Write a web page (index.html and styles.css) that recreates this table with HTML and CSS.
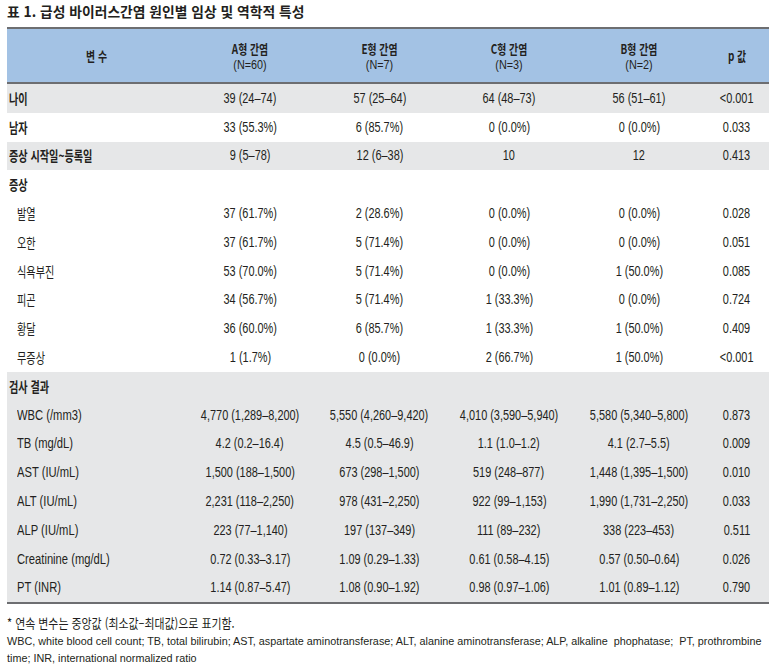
FILE: index.html
```html
<!DOCTYPE html>
<html lang="ko">
<head>
<meta charset="utf-8">
<title>표 1</title>
<link rel="stylesheet" href="styles.css">
</head>
<body>
<h1 class="title">표 1. 급성 바이러스간염 원인별 임상 및 역학적 특성</h1>
<table class="data">
  <colgroup>
    <col class="c-var"><col class="c-a"><col class="c-e"><col class="c-c"><col class="c-b"><col class="c-p">
  </colgroup>
  <thead>
    <tr>
      <th><span class="h1">변 수</span></th>
      <th><span class="h1">A형 간염</span><span class="h2">(N=60)</span></th>
      <th><span class="h1">E형 간염</span><span class="h2">(N=7)</span></th>
      <th><span class="h1">C형 간염</span><span class="h2">(N=3)</span></th>
      <th><span class="h1">B형 간염</span><span class="h2">(N=2)</span></th>
      <th><span class="h1">p 값</span></th>
    </tr>
  </thead>
  <tbody class="shade">
    <tr><td class="label ko bold"><span class="n">나이</span></td><td><span class="n">39 (24–74)</span></td><td><span class="n">57 (25–64)</span></td><td><span class="n">64 (48–73)</span></td><td><span class="n">56 (51–61)</span></td><td><span class="n">&lt;0.001</span></td></tr>
  </tbody>
  <tbody>
    <tr><td class="label ko bold"><span class="n">남자</span></td><td><span class="n">33 (55.3%)</span></td><td><span class="n">6 (85.7%)</span></td><td><span class="n">0 (0.0%)</span></td><td><span class="n">0 (0.0%)</span></td><td><span class="n">0.033</span></td></tr>
  </tbody>
  <tbody class="shade">
    <tr><td class="label ko bold"><span class="n">증상 시작일~등록일</span></td><td><span class="n">9 (5–78)</span></td><td><span class="n">12 (6–38)</span></td><td><span class="n">10</span></td><td><span class="n">12</span></td><td><span class="n">0.413</span></td></tr>
  </tbody>
  <tbody>
    <tr><td class="label ko bold"><span class="n">증상</span></td><td></td><td></td><td></td><td></td><td></td></tr>
    <tr><td class="label ko sub"><span class="n">발열</span></td><td><span class="n">37 (61.7%)</span></td><td><span class="n">2 (28.6%)</span></td><td><span class="n">0 (0.0%)</span></td><td><span class="n">0 (0.0%)</span></td><td><span class="n">0.028</span></td></tr>
    <tr><td class="label ko sub"><span class="n">오한</span></td><td><span class="n">37 (61.7%)</span></td><td><span class="n">5 (71.4%)</span></td><td><span class="n">0 (0.0%)</span></td><td><span class="n">0 (0.0%)</span></td><td><span class="n">0.051</span></td></tr>
    <tr><td class="label ko sub"><span class="n">식욕부진</span></td><td><span class="n">53 (70.0%)</span></td><td><span class="n">5 (71.4%)</span></td><td><span class="n">0 (0.0%)</span></td><td><span class="n">1 (50.0%)</span></td><td><span class="n">0.085</span></td></tr>
    <tr><td class="label ko sub"><span class="n">피곤</span></td><td><span class="n">34 (56.7%)</span></td><td><span class="n">5 (71.4%)</span></td><td><span class="n">1 (33.3%)</span></td><td><span class="n">0 (0.0%)</span></td><td><span class="n">0.724</span></td></tr>
    <tr><td class="label ko sub"><span class="n">황달</span></td><td><span class="n">36 (60.0%)</span></td><td><span class="n">6 (85.7%)</span></td><td><span class="n">1 (33.3%)</span></td><td><span class="n">1 (50.0%)</span></td><td><span class="n">0.409</span></td></tr>
    <tr><td class="label ko sub"><span class="n">무증상</span></td><td><span class="n">1 (1.7%)</span></td><td><span class="n">0 (0.0%)</span></td><td><span class="n">2 (66.7%)</span></td><td><span class="n">1 (50.0%)</span></td><td><span class="n">&lt;0.001</span></td></tr>
  </tbody>
  <tbody class="shade">
    <tr><td class="label ko bold"><span class="n">검사 결과</span></td><td></td><td></td><td></td><td></td><td></td></tr>
    <tr><td class="label en sub"><span class="n">WBC (/mm3)</span></td><td><span class="n">4,770 (1,289–8,200)</span></td><td><span class="n">5,550 (4,260–9,420)</span></td><td><span class="n">4,010 (3,590–5,940)</span></td><td><span class="n">5,580 (5,340–5,800)</span></td><td><span class="n">0.873</span></td></tr>
    <tr><td class="label en sub"><span class="n">TB (mg/dL)</span></td><td><span class="n">4.2 (0.2–16.4)</span></td><td><span class="n">4.5 (0.5–46.9)</span></td><td><span class="n">1.1 (1.0–1.2)</span></td><td><span class="n">4.1 (2.7–5.5)</span></td><td><span class="n">0.009</span></td></tr>
    <tr><td class="label en sub"><span class="n">AST (IU/mL)</span></td><td><span class="n">1,500 (188–1,500)</span></td><td><span class="n">673 (298–1,500)</span></td><td><span class="n">519 (248–877)</span></td><td><span class="n">1,448 (1,395–1,500)</span></td><td><span class="n">0.010</span></td></tr>
    <tr><td class="label en sub"><span class="n">ALT (IU/mL)</span></td><td><span class="n">2,231 (118–2,250)</span></td><td><span class="n">978 (431–2,250)</span></td><td><span class="n">922 (99–1,153)</span></td><td><span class="n">1,990 (1,731–2,250)</span></td><td><span class="n">0.033</span></td></tr>
    <tr><td class="label en sub"><span class="n">ALP (IU/mL)</span></td><td><span class="n">223 (77–1,140)</span></td><td><span class="n">197 (137–349)</span></td><td><span class="n">111 (89–232)</span></td><td><span class="n">338 (223–453)</span></td><td><span class="n">0.511</span></td></tr>
    <tr><td class="label en sub"><span class="n">Creatinine (mg/dL)</span></td><td><span class="n">0.72 (0.33–3.17)</span></td><td><span class="n">1.09 (0.29–1.33)</span></td><td><span class="n">0.61 (0.58–4.15)</span></td><td><span class="n">0.57 (0.50–0.64)</span></td><td><span class="n">0.026</span></td></tr>
    <tr><td class="label en sub"><span class="n">PT (INR)</span></td><td><span class="n">1.14 (0.87–5.47)</span></td><td><span class="n">1.08 (0.90–1.92)</span></td><td><span class="n">0.98 (0.97–1.06)</span></td><td><span class="n">1.01 (0.89–1.12)</span></td><td><span class="n">0.790</span></td></tr>
  </tbody>
</table>
<p class="note ko-note">* 연속 변수는 중앙값 (최소값–최대값)으로 표기함.</p>
<p class="note en-note">WBC, white blood cell count; TB, total bilirubin; AST, aspartate aminotransferase; ALT, alanine aminotransferase; ALP, alkaline &nbsp;phophatase; &nbsp;PT, prothrombine time; INR, international normalized ratio</p>
</body>
</html>
```
FILE: styles.css
```css
html, body {
  margin: 0;
  padding: 0;
  background: #ffffff;
}
body {
  padding: 0 0 0 7px;
  color: #231f20;
  font-family: "Liberation Sans", "Noto Sans CJK KR", sans-serif;
}
.title {
  margin: 0;
  height: 27px;
  font: bold 13.8px/22px "Noto Sans CJK KR", sans-serif;
  color: #231f20;
}
.data {
  width: 762px;
  table-layout: fixed;
  border-collapse: collapse;
  border-top: 2px solid #6d6e71;
  border-bottom: 2px solid #6d6e71;
}
.c-var { width: 179px; }
.c-a { width: 128px; }
.c-e { width: 131px; }
.c-c { width: 128px; }
.c-b { width: 132px; }
.c-p { width: 64px; }
.data thead th {
  background: #a3c2e4;
  height: 53px;
  padding: 0;
  border-bottom: 2px solid #6d6e71;
  text-align: center;
  vertical-align: middle;
}
.h1 {
  display: block;
  font: bold 13px/17px "Noto Sans CJK KR", sans-serif;
  transform: scaleX(0.76);
}
.h2 {
  display: block;
  font: normal 13.5px/15px "Liberation Sans", sans-serif;
  transform: scaleX(0.8);
}
.data td {
  height: 28.8px;
  padding: 0;
  text-align: center;
  vertical-align: middle;
  font: 14px/17px "Liberation Sans", sans-serif;
  white-space: nowrap;
}
.n {
  display: inline-block;
  transform: scaleX(0.78);
  transform-origin: center center;
}
.shade td {
  background: #e6e7e8;
}
.data td.label {
  text-align: left;
}
.data td.label .n {
  transform-origin: left center;
}
.data td.en .n {
  transform: scaleX(0.8);
}
.data td.ko {
  font-family: "Noto Sans CJK KR", sans-serif;
  font-size: 13.5px;
}
.data td.ko .n {
  transform: scaleX(0.75);
}
.data td.bold {
  font-weight: bold;
  padding-left: 2px;
}
.data td.sub {
  padding-left: 10px;
}
.note {
  margin: 0;
}
.ko-note {
  margin-top: 10px;
  font: 13px/18px "Noto Sans CJK KR", sans-serif;
  transform: scaleX(0.84);
  transform-origin: left center;
}
.en-note {
  width: 765px;
  margin-top: 1px;
  font: 10.8px/17px "Liberation Sans", sans-serif;
}
```
